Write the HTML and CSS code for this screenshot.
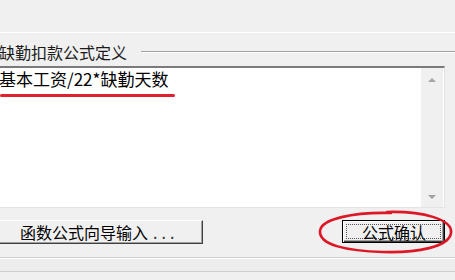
FILE: index.html
```html
<!DOCTYPE html>
<html lang="zh">
<head>
<meta charset="utf-8">
<title>缺勤扣款公式定义</title>
<link rel="stylesheet" href="styles.css">
</head>
<body>
<div class="page">
  <div class="topbar"></div>
  <div class="legend">
    <span class="legend-text">缺勤扣款公式定义</span>
    <span class="legend-line"></span>
  </div>
  <div class="editor">
    <div class="editor-text">基本工资/22*缺勤天数</div>
    <div class="scrollbar">
      <span class="arrow up"></span>
      <span class="arrow down"></span>
    </div>
  </div>
  <div class="actions">
    <button class="btn btn-wizard">函数公式向导输入<span class="dots">...</span></button>
    <button class="btn btn-default"><span class="focus">公式确认</span></button>
  </div>
  <div class="footer">
    <div class="footer-band"></div>
  </div>
  <div class="mark-underline"></div>
  <svg class="mark-ellipse" width="140" height="46" viewBox="0 0 140 46">
    <path d="M70 3 C 105 2, 136 10, 134 24 C 132 38, 100 44, 66 43 C 30 42, 2 36, 3 22 C 4 10, 36 3, 74 4" fill="none" stroke="#dc1826" stroke-width="2.6" stroke-linecap="round"/>
  </svg>
</div>
</body>
</html>
```

FILE: styles.css
```css
html, body {
  margin: 0;
  padding: 0;
}
body {
  width: 455px;
  height: 280px;
  overflow: hidden;
  background: #f0f0f0;
  font-family: "Noto Sans CJK SC", "Noto Sans", sans-serif;
  font-size: 16px;
  color: #000;
}
.page {
  position: relative;
  display: flex;
  flex-direction: column;
  width: 455px;
  height: 280px;
}
.topbar {
  height: 32px;
  border-bottom: 1px solid #ffffff;
  flex: none;
}
.legend {
  margin-top: 11px;
  height: 16px;
  display: flex;
  align-items: center;
  gap: 14px;
  flex: none;
}
.legend-text {
  line-height: 16px;
  margin-left: -1px;
  color: #1a1a1a;
}
.legend-line {
  flex: 1;
  height: 0;
  border-top: 1px solid #a0a0a0;
  border-bottom: 1px solid #ffffff;
  margin-top: -1px;
}
.editor {
  margin-top: 6px;
  width: 445px;
  height: 142px;
  box-sizing: border-box;
  display: flex;
  background: #ffffff;
  border-top: 2px solid #7a7a7a;
  border-right: 1px solid #e3e3e3;
  border-bottom: 1px solid #e3e3e3;
  flex: none;
}
.editor-text {
  flex: 1;
  padding-top: 2px;
  font-size: 17px;
  line-height: 17px;
  margin-left: -1px;
}
.scrollbar {
  width: 22px;
  margin-right: 1px;
  background: #f0f0f0;
  display: flex;
  flex-direction: column;
  justify-content: space-between;
  align-items: center;
  padding: 10px 0 8px;
}
.arrow {
  width: 0;
  height: 0;
  border-left: 4px solid transparent;
  border-right: 4px solid transparent;
}
.arrow.up {
  border-bottom: 4px solid #a3a3a3;
}
.arrow.down {
  border-top: 4px solid #a3a3a3;
}
.actions {
  margin-top: 12px;
  height: 24px;
  display: flex;
  justify-content: space-between;
  padding-right: 10px;
  flex: none;
}
.btn {
  margin: 0;
  padding: 0;
  font-family: inherit;
  font-size: 16px;
  line-height: 16px;
  color: #000;
  background: #f0f0f0;
  box-sizing: border-box;
}
.btn-wizard {
  margin-left: -3px;
  width: 206px;
  height: 24px;
  border: 1px solid;
  border-color: #ffffff #404040 #404040 #ffffff;
  box-shadow: inset -1px -1px 0 #a0a0a0;
  text-align: left;
  padding-left: 22px;
}
.dots {
  letter-spacing: 4px;
  margin-left: 5px;
  color: #333;
}
.btn-default {
  width: 103px;
  height: 23px;
  border: 1px solid #000;
  box-shadow: inset 1px 1px 0 #ffffff, inset -1px -1px 0 #404040, inset -2px -2px 0 #a0a0a0;
  padding: 3px;
  display: flex;
}
.focus {
  flex: 1;
  border: 1px dotted #555;
  display: flex;
  align-items: center;
  justify-content: center;
  padding-left: 1px;
}
.footer {
  margin-top: 13px;
  flex: none;
}
.footer-band {
  height: 13px;
  border-top: 1px solid #cfcfcf;
  border-bottom: 1px solid #cfcfcf;
  box-shadow: inset 0 1px 0 #ffffff;
  background: #ededed;
}
.mark-underline {
  position: absolute;
  left: 0;
  top: 94px;
  width: 175px;
  height: 3px;
  border-radius: 2px;
  background: #e0202e;
}
.mark-ellipse {
  position: absolute;
  left: 317px;
  top: 209px;
}
```
